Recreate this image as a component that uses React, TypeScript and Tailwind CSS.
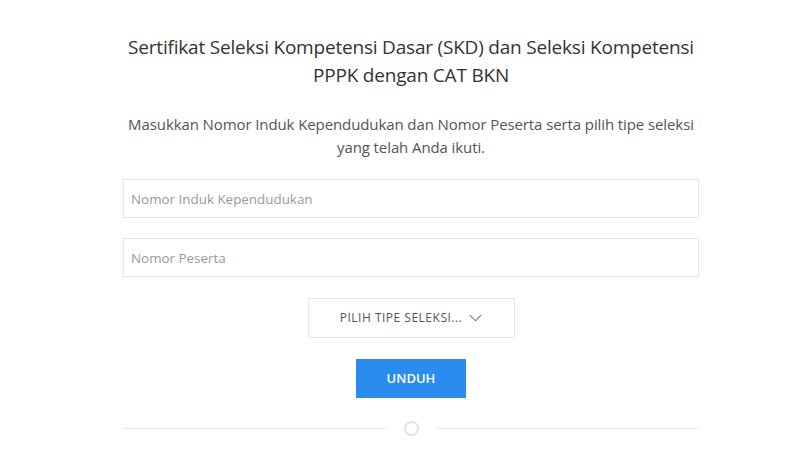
import { useState } from 'react';

export default function App() {
  const [nik, setNik] = useState('');
  const [peserta, setPeserta] = useState('');

  return (
    <div className="min-h-screen bg-white flex justify-center pl-[22px]" style={{ fontFamily: '"Open Sans", "Noto Sans", sans-serif' }}>
      <div className="w-[576px] flex flex-col items-center pt-[33px]">
        {/* Title */}
        <h1 className="text-center text-[19px] leading-[28px] text-[#333] font-normal tracking-[-0.2px]">
          Sertifikat Seleksi Kompetensi Dasar (SKD) dan Seleksi Kompetensi PPPK dengan CAT BKN
        </h1>

        <p className="mt-[24px] text-center text-[15px] leading-[23px] text-[#555] tracking-[-0.1px]">
          Masukkan Nomor Induk Kependudukan dan Nomor Peserta serta pilih tipe seleksi yang telah Anda ikuti.
        </p>

        {/* Inputs */}
        <input
          value={nik}
          onChange={(e) => setNik(e.target.value)}
          placeholder="Nomor Induk Kependudukan"
          className="mt-[20px] w-full h-[39px] border border-[#e6e6e6] px-[7px] text-[13.4px] text-[#555] placeholder:text-[#999] outline-none"
        />
        <input
          value={peserta}
          onChange={(e) => setPeserta(e.target.value)}
          placeholder="Nomor Peserta"
          className="mt-[20px] w-full h-[39px] border border-[#e6e6e6] px-[7px] text-[13.4px] text-[#555] placeholder:text-[#999] outline-none"
        />

        {/* Select */}
        <button className="mt-[21px] w-[207px] h-[40px] border border-[#e6e6e6] bg-white flex items-center justify-center gap-[7px] text-[12px] tracking-[0.5px] text-[#555] uppercase">
          <span>Pilih Tipe Seleksi...</span>
          <svg width="13" height="8" viewBox="0 0 14 8" fill="none" stroke="#777" strokeWidth="1.2">
            <path d="M1 1l6 6 6-6" />
          </svg>
        </button>

        {/* Submit */}
        <button className="mt-[21px] w-[110px] h-[39px] bg-[#2b8cf0] text-white text-[13px] font-semibold">
          UNDUH
        </button>

        {/* Divider */}
        <div className="mt-[23px] w-full flex items-center">
          <div className="flex-1 h-px bg-[#e8e8e8]" />
          <div className="mx-[17px] w-[15px] h-[15px] rounded-full border-2 border-[#e2e2e2]" />
          <div className="flex-1 h-px bg-[#e8e8e8]" />
        </div>
      </div>
    </div>
  );
}
